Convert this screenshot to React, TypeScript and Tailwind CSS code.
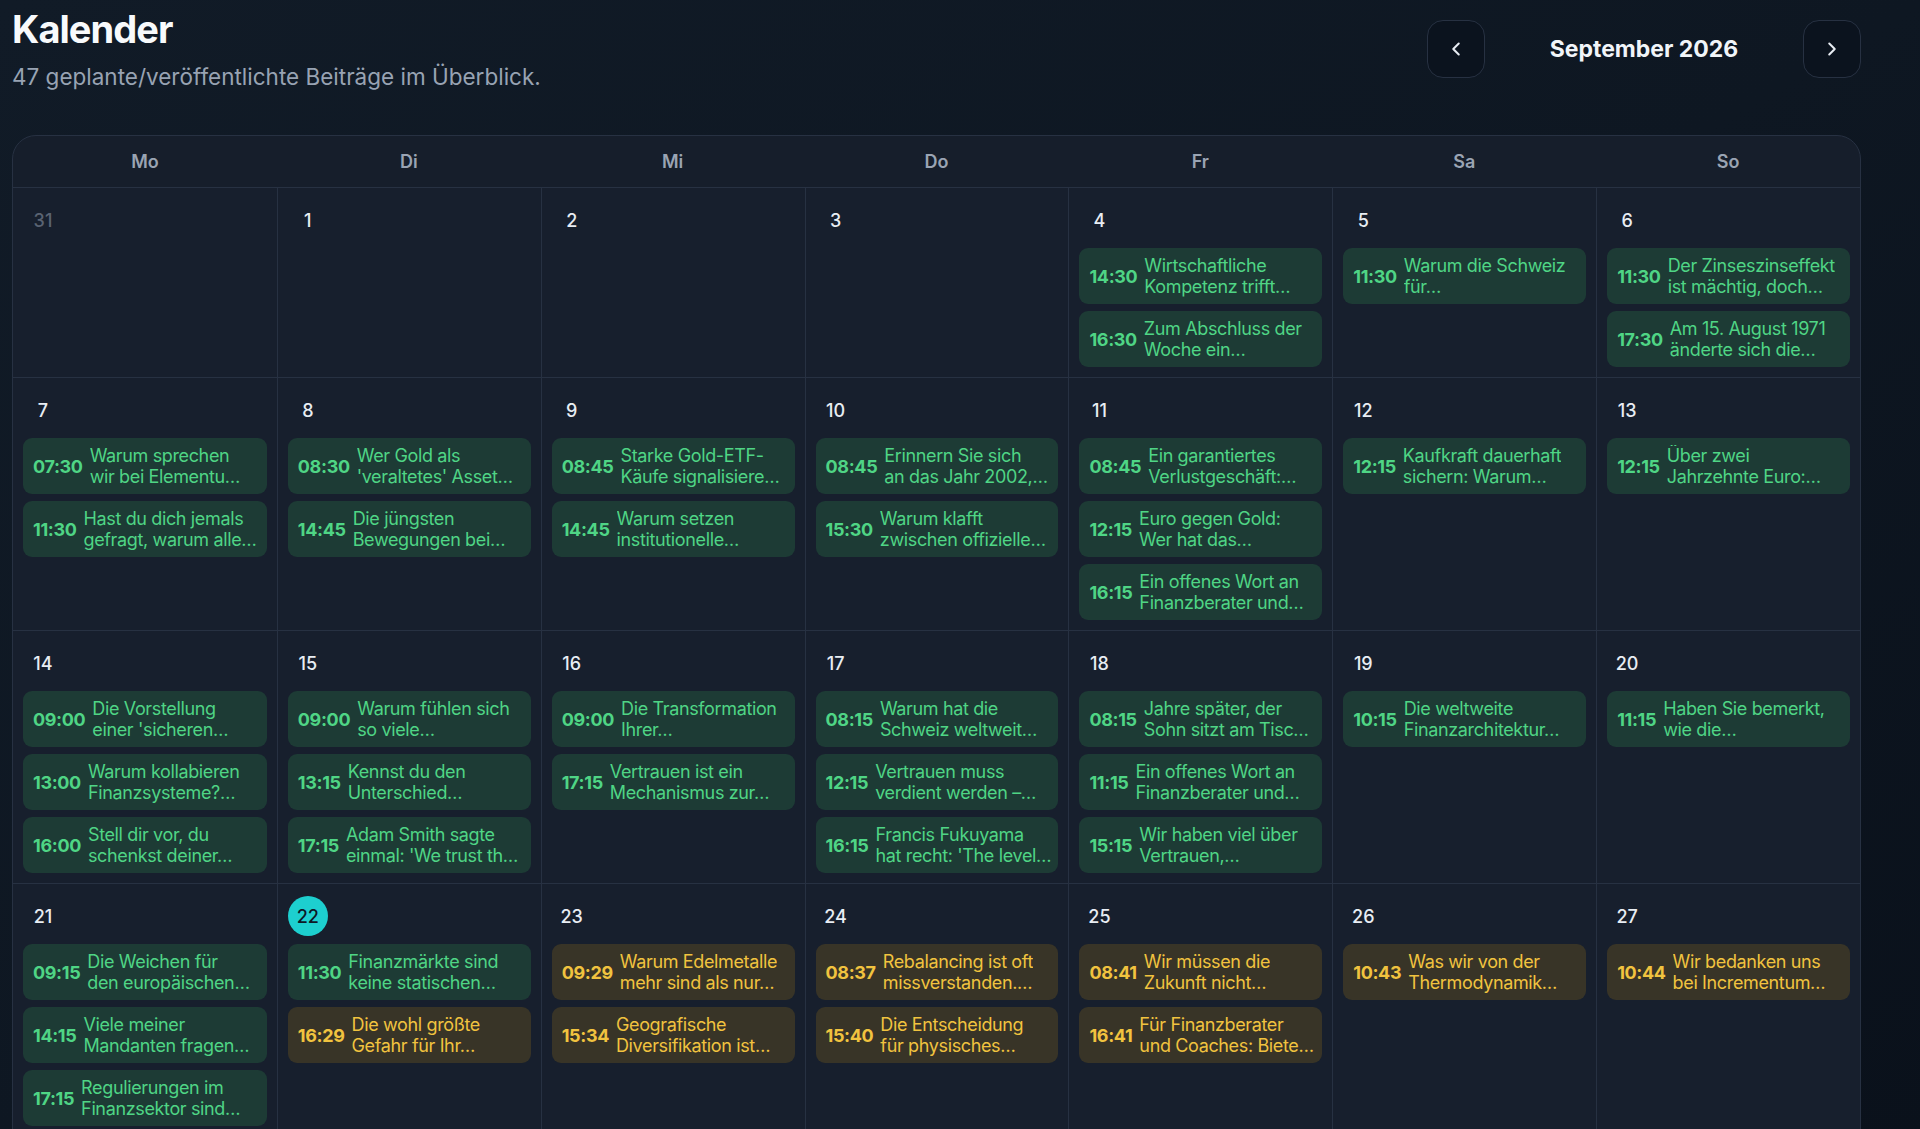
import React from 'react';
import { ChevronLeft, ChevronRight } from 'lucide-react';

type Post = { time: string; lines: [string, string]; pending?: boolean };
type Day = { day: number; outside?: boolean; today?: boolean; posts: Post[] };

const weekdays = ['Mo', 'Di', 'Mi', 'Do', 'Fr', 'Sa', 'So'];

const p = (time: string, a: string, b: string, pending = false): Post => ({ time, lines: [a, b], pending });

const weeks: Day[][] = [
  [
    { day: 31, outside: true, posts: [] },
    { day: 1, posts: [] },
    { day: 2, posts: [] },
    { day: 3, posts: [] },
    {
      day: 4,
      posts: [
        p('14:30', 'Wirtschaftliche', 'Kompetenz trifft…'),
        p('16:30', 'Zum Abschluss der', 'Woche ein…'),
      ],
    },
    { day: 5, posts: [p('11:30', 'Warum die Schweiz', 'für…')] },
    {
      day: 6,
      posts: [
        p('11:30', 'Der Zinseszinseffekt', 'ist mächtig, doch…'),
        p('17:30', 'Am 15. August 1971', 'änderte sich die…'),
      ],
    },
  ],
  [
    {
      day: 7,
      posts: [
        p('07:30', 'Warum sprechen', 'wir bei Elementu…'),
        p('11:30', 'Hast du dich jemals', 'gefragt, warum alle…'),
      ],
    },
    {
      day: 8,
      posts: [
        p('08:30', 'Wer Gold als', "'veraltetes' Asset…"),
        p('14:45', 'Die jüngsten', 'Bewegungen bei…'),
      ],
    },
    {
      day: 9,
      posts: [
        p('08:45', 'Starke Gold-ETF-', 'Käufe signalisiere…'),
        p('14:45', 'Warum setzen', 'institutionelle…'),
      ],
    },
    {
      day: 10,
      posts: [
        p('08:45', 'Erinnern Sie sich', 'an das Jahr 2002,…'),
        p('15:30', 'Warum klafft', 'zwischen offizielle…'),
      ],
    },
    {
      day: 11,
      posts: [
        p('08:45', 'Ein garantiertes', 'Verlustgeschäft:…'),
        p('12:15', 'Euro gegen Gold:', 'Wer hat das…'),
        p('16:15', 'Ein offenes Wort an', 'Finanzberater und…'),
      ],
    },
    { day: 12, posts: [p('12:15', 'Kaufkraft dauerhaft', 'sichern: Warum…')] },
    { day: 13, posts: [p('12:15', 'Über zwei', 'Jahrzehnte Euro:…')] },
  ],
  [
    {
      day: 14,
      posts: [
        p('09:00', 'Die Vorstellung', "einer 'sicheren…"),
        p('13:00', 'Warum kollabieren', 'Finanzsysteme?…'),
        p('16:00', 'Stell dir vor, du', 'schenkst deiner…'),
      ],
    },
    {
      day: 15,
      posts: [
        p('09:00', 'Warum fühlen sich', 'so viele…'),
        p('13:15', 'Kennst du den', 'Unterschied…'),
        p('17:15', 'Adam Smith sagte', "einmal: 'We trust th…"),
      ],
    },
    {
      day: 16,
      posts: [
        p('09:00', 'Die Transformation', 'Ihrer…'),
        p('17:15', 'Vertrauen ist ein', 'Mechanismus zur…'),
      ],
    },
    {
      day: 17,
      posts: [
        p('08:15', 'Warum hat die', 'Schweiz weltweit…'),
        p('12:15', 'Vertrauen muss', 'verdient werden –…'),
        p('16:15', 'Francis Fukuyama', "hat recht: 'The level…"),
      ],
    },
    {
      day: 18,
      posts: [
        p('08:15', 'Jahre später, der', 'Sohn sitzt am Tisc…'),
        p('11:15', 'Ein offenes Wort an', 'Finanzberater und…'),
        p('15:15', 'Wir haben viel über', 'Vertrauen,…'),
      ],
    },
    { day: 19, posts: [p('10:15', 'Die weltweite', 'Finanzarchitektur…')] },
    { day: 20, posts: [p('11:15', 'Haben Sie bemerkt,', 'wie die…')] },
  ],
  [
    {
      day: 21,
      posts: [
        p('09:15', 'Die Weichen für', 'den europäischen…'),
        p('14:15', 'Viele meiner', 'Mandanten fragen…'),
        p('17:15', 'Regulierungen im', 'Finanzsektor sind…'),
      ],
    },
    {
      day: 22,
      today: true,
      posts: [
        p('11:30', 'Finanzmärkte sind', 'keine statischen…'),
        p('16:29', 'Die wohl größte', 'Gefahr für Ihr…', true),
      ],
    },
    {
      day: 23,
      posts: [
        p('09:29', 'Warum Edelmetalle', 'mehr sind als nur…', true),
        p('15:34', 'Geografische', 'Diversifikation ist…', true),
      ],
    },
    {
      day: 24,
      posts: [
        p('08:37', 'Rebalancing ist oft', 'missverstanden.…', true),
        p('15:40', 'Die Entscheidung', 'für physisches…', true),
      ],
    },
    {
      day: 25,
      posts: [
        p('08:41', 'Wir müssen die', 'Zukunft nicht…', true),
        p('16:41', 'Für Finanzberater', 'und Coaches: Biete…', true),
      ],
    },
    { day: 26, posts: [p('10:43', 'Was wir von der', 'Thermodynamik…', true)] },
    { day: 27, posts: [p('10:44', 'Wir bedanken uns', 'bei Incrementum…', true)] },
  ],
];

function PostCard({ post }: { post: Post }) {
  return (
    <div
      className={`flex items-center gap-[7px] rounded-[9px] py-[7px] pr-1 pl-2.5 ${
        post.pending ? 'bg-[#383427] text-[#f1c33f]' : 'bg-[#1d3b35] text-[#4fd585]'
      }`}
    >
      <span className="shrink-0 text-[18px] font-bold leading-[21px] tracking-[-0.02em]">{post.time}</span>
      <span className="min-w-0 text-[18px] leading-[21px] tracking-[-0.02em]">
        <span className="block truncate">{post.lines[0]}</span>
        <span className="block truncate">{post.lines[1]}</span>
      </span>
    </div>
  );
}

function DayCell({ day, col }: { day: Day; col: number }) {
  return (
    <div
      className={`flex flex-col border-t border-[#273142] bg-[#171f2d] px-2.5 pt-[12px] pb-2.5 ${
        col > 0 ? 'border-l' : ''
      }`}
    >
      <div
        className={`flex h-10 w-10 items-center justify-center rounded-full text-[18px] font-medium ${
          day.today
            ? 'bg-[#1dcfcf] font-bold text-[#0d1826]'
            : day.outside
              ? 'text-[#5a6372]'
              : 'text-[#e8edf3]'
        }`}
      >
        {day.day}
      </div>
      <div className="mt-[8px] flex flex-col gap-[7px]">
        {day.posts.map((post) => (
          <PostCard key={post.time + post.lines[0]} post={post} />
        ))}
      </div>
    </div>
  );
}

export default function App() {
  return (
    <div
      className="min-h-screen bg-gradient-to-br from-[#111b27] via-[#0e1722] to-[#0a111b] pl-3 pt-1.5 text-white"
      style={{ fontFamily: 'Inter, "Noto Sans", sans-serif' }}
    >
      <div className="w-[1849px]">
        <div className="flex items-start justify-between">
          <div>
            <h1 className="text-[38px] font-bold leading-[46px] tracking-tight text-[#f8fafc]">Kalender</h1>
            <p className="mt-2.5 text-[22.5px] leading-[30px] text-[#98a3b3]">
              47 geplante/veröffentlichte Beiträge im Überblick.
            </p>
          </div>
          <div className="mt-3.5 flex items-center">
            <button className="flex h-[58px] w-[58px] items-center justify-center rounded-2xl border border-[#273142] bg-[#0b131e] text-[#e8edf3]">
              <ChevronLeft size={22} strokeWidth={2.2} />
            </button>
            <div className="w-[318px] text-center text-[23px] font-bold text-[#f1f5f9]">September 2026</div>
            <button className="flex h-[58px] w-[58px] items-center justify-center rounded-2xl border border-[#273142] bg-[#0b131e] text-[#e8edf3]">
              <ChevronRight size={22} strokeWidth={2.2} />
            </button>
          </div>
        </div>

        <div className="mt-[43px] overflow-hidden rounded-t-3xl border border-[#273142] bg-[#161e2b]">
          <div className="grid grid-cols-7">
            {weekdays.map((w) => (
              <div key={w} className="flex h-[51px] items-center justify-center text-[18px] font-semibold text-[#9aa4b3]">
                {w}
              </div>
            ))}
          </div>
          {weeks.map((week, i) => (
            <div key={i} className="grid grid-cols-7">
              {week.map((day, col) => (
                <DayCell key={day.day} day={day} col={col} />
              ))}
            </div>
          ))}
        </div>
      </div>
    </div>
  );
}
